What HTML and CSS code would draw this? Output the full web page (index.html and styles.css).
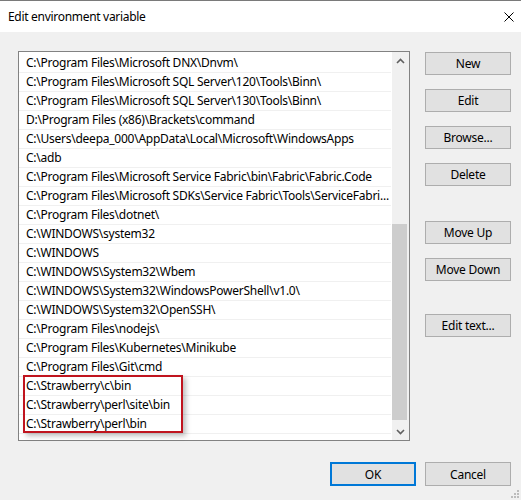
FILE: index.html
```html
<!DOCTYPE html>
<html>
<head>
<meta charset="utf-8">
<link rel="stylesheet" href="styles.css">
</head>
<body>
<div class="window">
  <div class="titlebar">
    <span class="title">Edit environment variable</span>
    <svg class="close" width="10" height="10" viewBox="0 0 10 10"><path d="M0.5 0.5 L9.5 9.5 M9.5 0.5 L0.5 9.5" stroke="#000" stroke-width="1" fill="none"/></svg>
  </div>
  <div class="content">
    <div class="main">
      <div class="listbox">
        <div class="rows">
          <div class="row">C:\Program Files\Microsoft DNX\Dnvm\</div>
          <div class="row">C:\Program Files\Microsoft SQL Server\120\Tools\Binn\</div>
          <div class="row">C:\Program Files\Microsoft SQL Server\130\Tools\Binn\</div>
          <div class="row">D:\Program Files (x86)\Brackets\command</div>
          <div class="row">C:\Users\deepa_000\AppData\Local\Microsoft\WindowsApps</div>
          <div class="row">C:\adb</div>
          <div class="row">C:\Program Files\Microsoft Service Fabric\bin\Fabric\Fabric.Code</div>
          <div class="row">C:\Program Files\Microsoft SDKs\Service Fabric\Tools\ServiceFabri...</div>
          <div class="row">C:\Program Files\dotnet\</div>
          <div class="row">C:\WINDOWS\system32</div>
          <div class="row">C:\WINDOWS</div>
          <div class="row">C:\WINDOWS\System32\Wbem</div>
          <div class="row">C:\WINDOWS\System32\WindowsPowerShell\v1.0\</div>
          <div class="row">C:\WINDOWS\System32\OpenSSH\</div>
          <div class="row">C:\Program Files\nodejs\</div>
          <div class="row">C:\Program Files\Kubernetes\Minikube</div>
          <div class="row">C:\Program Files\Git\cmd</div>
          <div class="row">C:\Strawberry\c\bin</div>
          <div class="row">C:\Strawberry\perl\site\bin</div>
          <div class="row">C:\Strawberry\perl\bin</div>
        </div>
        <div class="scrollbar">
          <div class="arrow"><svg width="9" height="6" viewBox="0 0 9 6"><path d="M1 5 L4.5 1.5 L8 5" stroke="#606060" stroke-width="1.6" fill="none"/></svg></div>
          <div class="track"><div class="thumb"></div></div>
          <div class="arrow"><svg width="9" height="6" viewBox="0 0 9 6"><path d="M1 1 L4.5 4.5 L8 1" stroke="#606060" stroke-width="1.6" fill="none"/></svg></div>
        </div>
        <div class="highlight"></div>
      </div>
      <div class="side">
        <div class="group">
          <button class="btn">New</button>
          <button class="btn">Edit</button>
          <button class="btn">Browse...</button>
          <button class="btn">Delete</button>
        </div>
        <div class="group move">
          <button class="btn">Move Up</button>
          <button class="btn">Move Down</button>
        </div>
        <div class="group edittext">
          <button class="btn">Edit text...</button>
        </div>
      </div>
    </div>
    <div class="footer">
      <button class="btn wide primary">OK</button>
      <button class="btn wide">Cancel</button>
    </div>
    <svg class="grip" width="10" height="10" viewBox="0 0 10 10">
      <rect x="7" y="1" width="2" height="2" fill="#bcbcbc"/>
      <rect x="4" y="4" width="2" height="2" fill="#bcbcbc"/>
      <rect x="7" y="4" width="2" height="2" fill="#bcbcbc"/>
      <rect x="1" y="7" width="2" height="2" fill="#bcbcbc"/>
      <rect x="4" y="7" width="2" height="2" fill="#bcbcbc"/>
      <rect x="7" y="7" width="2" height="2" fill="#bcbcbc"/>
    </svg>
  </div>
</div>
</body>
</html>
```
FILE: styles.css
```css
* { box-sizing: border-box; }
html, body { margin: 0; padding: 0; background: #f0f0f0; }
body {
  font-family: "Noto Sans", "Liberation Sans", sans-serif;
  font-size: 12px;
  letter-spacing: -0.25px;
  color: #000;
}
.window {
  width: 521px;
  height: 500px;
  display: flex;
  flex-direction: column;
  border-top: 1px solid #7a7a7a;
  position: relative;
}
.titlebar {
  height: 31px;
  background: #fff;
  display: flex;
  align-items: center;
  justify-content: space-between;
  padding: 0 7px 0 8px;
}
.title { font-size: 12px; line-height: 14px; letter-spacing: -0.3px; }
.close { display: block; }
.content {
  flex: 1;
  background: #f0f0f0;
  padding: 19px 10px 0 18px;
  position: relative;
}
.main {
  display: flex;
  gap: 15px;
}
.listbox {
  width: 392px;
  height: 390px;
  border: 1px solid #828282;
  background: #fff;
  display: flex;
  position: relative;
}
.rows {
  flex: 1;
  padding-top: 2px;
  overflow: hidden;
  padding-right: 1px;
}
.row {
  height: 19px;
  line-height: 18px;
  padding-left: 7px;
  border-bottom: 1px solid #f0f0f0;
  white-space: nowrap;
  overflow: hidden;
}
.scrollbar {
  width: 17px;
  background: #f0f0f0;
  display: flex;
  flex-direction: column;
}
.arrow {
  height: 17px;
  display: flex;
  align-items: center;
  justify-content: center;
}
.track {
  flex: 1;
  position: relative;
  padding-top: 155px;
}
.thumb {
  height: 196px;
  width: 15px;
  background: #cdcdcd;
}
.highlight {
  position: absolute;
  left: 4px;
  top: 323px;
  width: 160px;
  height: 58px;
  border: 2px solid #c0141e;
  box-shadow: 3px 3px 5px rgba(0,0,0,0.25);
}
.side {
  width: 86px;
  padding-top: 1px;
  display: flex;
  flex-direction: column;
}
.group {
  display: flex;
  flex-direction: column;
  gap: 14px;
}
.group.move { margin-top: 35px; }
.group.edittext { margin-top: 33px; }
.btn {
  width: 86px;
  height: 23px;
  background: #e1e1e1;
  border: 1px solid #adadad;
  font-family: inherit;
  font-size: 12px;
  letter-spacing: -0.25px;
  color: #000;
  padding: 0;
  margin: 0;
}
.footer {
  display: flex;
  justify-content: flex-end;
  gap: 9px;
  margin-top: 21px;
}
.btn.wide { height: 24px; }
.btn.primary { border: 2px solid #0078d7; }
.grip {
  position: absolute;
  right: 1px;
  bottom: 1px;
}
```
